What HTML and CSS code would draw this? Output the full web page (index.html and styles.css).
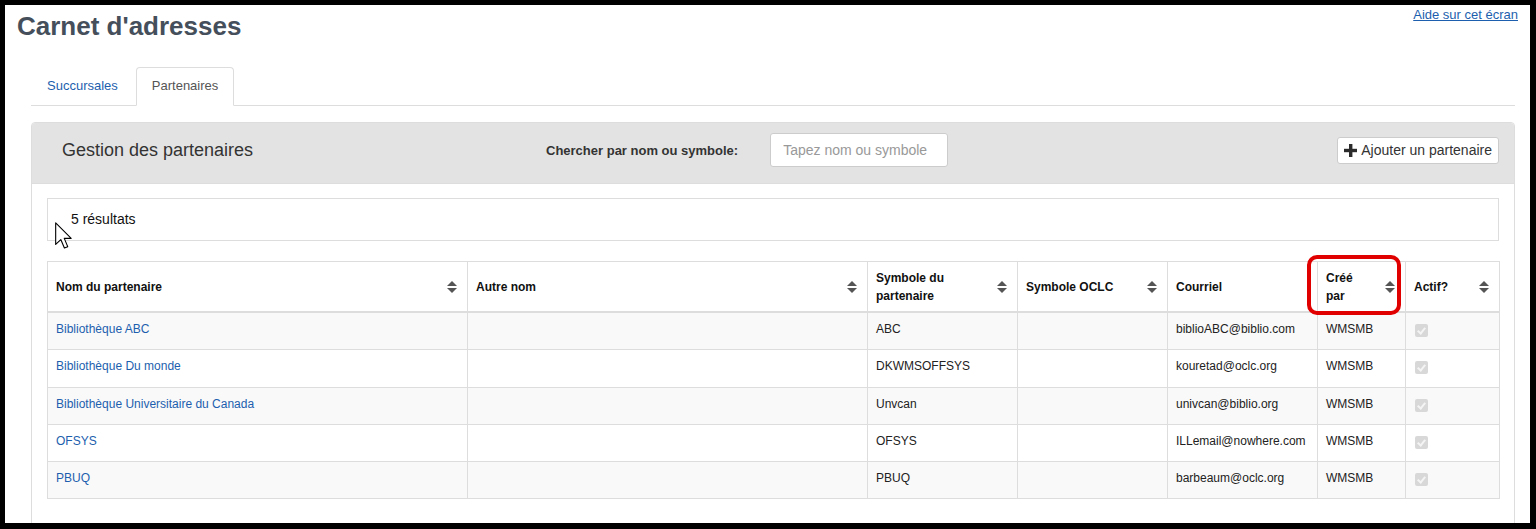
FILE: index.html
```html
<!DOCTYPE html>
<html lang="fr">
<head>
    <meta charset="UTF-8">
    <title>Carnet d'adresses</title>
    <link rel="stylesheet" href="styles.css">
</head>
<body>
    <div class="screen">
        <div class="top-bar">
            <h1 class="page-title">Carnet d'adresses</h1>
            <a class="help-link" href="#">Aide sur cet écran</a>
        </div>

        <div class="content">
            <ul class="nav-tabs">
                <li><a href="#">Succursales</a></li>
                <li class="active"><a href="#">Partenaires</a></li>
            </ul>

            <div class="panel">
                <div class="panel-heading">
                    <div class="panel-title">Gestion des partenaires</div>
                    <label class="search-label" for="search">Chercher par nom ou symbole:</label>
                    <input class="search-input" id="search" type="text" placeholder="Tapez nom ou symbole">
                    <button class="btn-add" type="button">
                        <svg width="13" height="13" viewBox="0 0 13 13">
                            <rect x="5" y="0" width="3.4" height="13" fill="#2b2b2b"/>
                            <rect x="0" y="4.8" width="13" height="3.4" fill="#2b2b2b"/>
                        </svg>
                        Ajouter un partenaire
                    </button>
                </div>

                <div class="panel-body">
                    <div class="results">5 résultats</div>

                    <table class="grid">
                        <colgroup>
                            <col style="width: 420px">
                            <col style="width: 400px">
                            <col style="width: 150px">
                            <col style="width: 150px">
                            <col style="width: 150px">
                            <col style="width: 88px">
                            <col style="width: 94px">
                        </colgroup>
                        <thead>
                            <tr>
                                <th><div class="th-in"><span>Nom du partenaire</span><i class="sort"></i></div></th>
                                <th><div class="th-in"><span>Autre nom</span><i class="sort"></i></div></th>
                                <th><div class="th-in"><span>Symbole du partenaire</span><i class="sort"></i></div></th>
                                <th><div class="th-in"><span>Symbole OCLC</span><i class="sort"></i></div></th>
                                <th><div class="th-in"><span>Courriel</span></div></th>
                                <th><div class="th-in"><span>Créé par</span><i class="sort"></i></div></th>
                                <th><div class="th-in"><span>Actif?</span><i class="sort"></i></div></th>
                            </tr>
                        </thead>
                        <tbody>
                            <tr>
                                <td><a href="#">Bibliothèque ABC</a></td>
                                <td></td>
                                <td>ABC</td>
                                <td></td>
                                <td>biblioABC@biblio.com</td>
                                <td>WMSMB</td>
                                <td><span class="check"></span></td>
                            </tr>
                            <tr>
                                <td><a href="#">Bibliothèque Du monde</a></td>
                                <td></td>
                                <td>DKWMSOFFSYS</td>
                                <td></td>
                                <td>kouretad@oclc.org</td>
                                <td>WMSMB</td>
                                <td><span class="check"></span></td>
                            </tr>
                            <tr>
                                <td><a href="#">Bibliothèque Universitaire du Canada</a></td>
                                <td></td>
                                <td>Unvcan</td>
                                <td></td>
                                <td>univcan@biblio.org</td>
                                <td>WMSMB</td>
                                <td><span class="check"></span></td>
                            </tr>
                            <tr>
                                <td><a href="#">OFSYS</a></td>
                                <td></td>
                                <td>OFSYS</td>
                                <td></td>
                                <td>ILLemail@nowhere.com</td>
                                <td>WMSMB</td>
                                <td><span class="check"></span></td>
                            </tr>
                            <tr>
                                <td><a href="#">PBUQ</a></td>
                                <td></td>
                                <td>PBUQ</td>
                                <td></td>
                                <td>barbeaum@oclc.org</td>
                                <td>WMSMB</td>
                                <td><span class="check"></span></td>
                            </tr>
                        </tbody>
                    </table>
                </div>
            </div>
        </div>

        <!-- annotation par-dessus la capture -->
        <div class="highlight"></div>
        <svg class="cursor" width="19" height="27" viewBox="0 0 12.5 19.5">
            <path d="M0.6 0.6 L0.6 16.2 L4.3 12.7 L6.9 18.8 L9.3 17.8 L6.8 11.8 L11.8 11.8 Z" fill="#fff" stroke="#000" stroke-width="0.8" stroke-linejoin="round"/>
        </svg>
    </div>
</body>
</html>
```

FILE: styles.css
```css
html {
  background: #000;
}

body {
  margin: 0;
  font-family: 'Liberation Sans', Arial, sans-serif;
  color: #333;
}

.screen {
  position: relative;
  margin: 5px 6px 0 5px;
  height: 518px;
  background: #fff;
  overflow: hidden;
}

/* en-tête de page */
.top-bar {
  display: flex;
  justify-content: space-between;
  align-items: flex-start;
  padding: 0 12px;
}

.page-title {
  margin: 6px 0 0;
  font-size: 26px;
  line-height: 30px;
  font-weight: bold;
  color: #454f5b;
}

.help-link {
  margin-top: 2px;
  font-size: 13px;
  line-height: 15px;
  color: #1d5fae;
  text-decoration: underline;
}

.content {
  padding: 0 15px 0 26px;
}

/* onglets */
.nav-tabs {
  display: flex;
  margin: 26px 0 0;
  padding: 0;
  list-style: none;
  border-bottom: 1px solid #ddd;
}

.nav-tabs li {
  margin-right: 2px;
  margin-bottom: -1px;
}

.nav-tabs a {
  display: block;
  padding: 9px 15px 10px;
  font-size: 13px;
  line-height: 18px;
  color: #1d5fae;
  text-decoration: none;
  border: 1px solid transparent;
  border-radius: 4px 4px 0 0;
}

.nav-tabs .active a {
  color: #555;
  background: #fff;
  border-color: #ddd #ddd transparent;
}

/* panneau */
.panel {
  margin-top: 16px;
  border: 1px solid #ddd;
  border-radius: 4px;
}

.panel-heading {
  display: flex;
  align-items: center;
  padding: 10px 15px 16px 30px;
  background: #e3e3e3;
  border-bottom: 1px solid #ddd;
  border-radius: 3px 3px 0 0;
}

.panel-title {
  width: 484px;
  font-size: 18px;
  line-height: 20px;
  color: #333;
}

.search-label {
  font-size: 13px;
  font-weight: bold;
  color: #333;
}

.search-input {
  box-sizing: border-box;
  width: 178px;
  height: 34px;
  margin-left: 32px;
  padding: 0 12px;
  font-family: inherit;
  font-size: 14px;
  color: #555;
  border: 1px solid #ccc;
  border-radius: 3px;
  background: #fff;
}

.search-input::placeholder {
  color: #999;
}

.btn-add {
  display: flex;
  align-items: center;
  gap: 4px;
  height: 27px;
  margin-left: auto;
  padding: 0 6px;
  font-family: inherit;
  font-size: 14px;
  color: #333;
  background: #fff;
  border: 1px solid #ccc;
  border-radius: 3px;
}

.panel-body {
  padding: 14px 15px 40px;
}

.results {
  padding: 10px 23px 11px;
  font-size: 14px;
  line-height: 20px;
  color: #111;
  border: 1px solid #ddd;
}

/* tableau des partenaires */
.grid {
  width: 100%;
  margin-top: 20px;
  table-layout: fixed;
  border-collapse: collapse;
  font-size: 12px;
  border: 1px solid #ddd;
}

.grid th {
  padding: 7px 10px 6px 8px;
  text-align: left;
  font-weight: bold;
  line-height: 18px;
  color: #111;
  border: 1px solid #ddd;
  border-bottom: 2px solid #ddd;
  vertical-align: middle;
}

.th-in {
  display: flex;
  align-items: center;
}

.th-in span {
  flex: 1;
  margin-right: 20px;
}

/* flèches de tri */
.sort {
  flex: none;
  display: flex;
  flex-direction: column;
  align-items: center;
  gap: 2px;
  width: 10px;
}

.sort::before,
.sort::after {
  content: "";
  width: 0;
  height: 0;
  border-left: 5px solid transparent;
  border-right: 5px solid transparent;
}

.sort::before {
  border-bottom: 5px solid #555;
}

.sort::after {
  border-top: 5px solid #555;
}

.grid td {
  padding: 8px 8px 11.25px;
  line-height: 17px;
  color: #222;
  border: 1px solid #ddd;
  vertical-align: top;
  white-space: nowrap;
}

.grid tbody tr:nth-child(odd) {
  background: #f9f9f9;
}

.grid td a {
  color: #1d5fae;
  text-decoration: none;
}

.check {
  display: block;
  width: 13px;
  height: 13px;
  margin-top: 3px;
  margin-bottom: 1px;
  margin-left: 1px;
  border-radius: 2px;
  background: #d8d8d8;
  position: relative;
}

.check::after {
  content: "";
  position: absolute;
  left: 4px;
  top: 2px;
  width: 3px;
  height: 6px;
  border: solid #f4f4f4;
  border-width: 0 2px 2px 0;
  transform: rotate(40deg);
}

/* marque rouge et pointeur de souris */
.highlight {
  position: absolute;
  left: 1302px;
  top: 250px;
  width: 94px;
  height: 60px;
  box-sizing: border-box;
  border: 4px solid #e10000;
  border-radius: 10px;
}

.cursor {
  position: absolute;
  left: 49px;
  top: 217px;
}
```
